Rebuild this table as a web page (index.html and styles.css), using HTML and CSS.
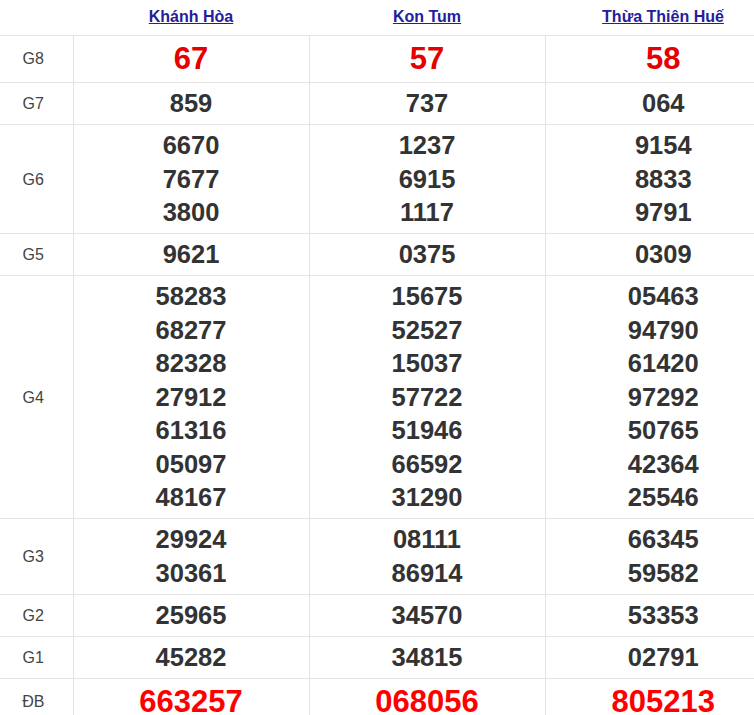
FILE: index.html
```html
<!DOCTYPE html>
<html lang="vi">
<head>
<meta charset="utf-8">
<title>XSMT</title>
<link rel="stylesheet" href="styles.css">
</head>
<body>
<table class="kq">
  <thead>
    <tr class="head">
      <th class="lbl"></th>
      <th><a href="#">Khánh Hòa</a></th>
      <th><a href="#">Kon Tum</a></th>
      <th><a href="#">Thừa Thiên Huế</a></th>
    </tr>
  </thead>
  <tbody>
    <tr class="g8">
      <td class="lbl">G8</td>
      <td><div>67</div></td>
      <td><div>57</div></td>
      <td><div>58</div></td>
    </tr>
    <tr>
      <td class="lbl">G7</td>
      <td><div>859</div></td>
      <td><div>737</div></td>
      <td><div>064</div></td>
    </tr>
    <tr>
      <td class="lbl">G6</td>
      <td><div>6670</div><div>7677</div><div>3800</div></td>
      <td><div>1237</div><div>6915</div><div>1117</div></td>
      <td><div>9154</div><div>8833</div><div>9791</div></td>
    </tr>
    <tr>
      <td class="lbl">G5</td>
      <td><div>9621</div></td>
      <td><div>0375</div></td>
      <td><div>0309</div></td>
    </tr>
    <tr>
      <td class="lbl">G4</td>
      <td><div>58283</div><div>68277</div><div>82328</div><div>27912</div><div>61316</div><div>05097</div><div>48167</div></td>
      <td><div>15675</div><div>52527</div><div>15037</div><div>57722</div><div>51946</div><div>66592</div><div>31290</div></td>
      <td><div>05463</div><div>94790</div><div>61420</div><div>97292</div><div>50765</div><div>42364</div><div>25546</div></td>
    </tr>
    <tr>
      <td class="lbl">G3</td>
      <td><div>29924</div><div>30361</div></td>
      <td><div>08111</div><div>86914</div></td>
      <td><div>66345</div><div>59582</div></td>
    </tr>
    <tr>
      <td class="lbl">G2</td>
      <td><div>25965</div></td>
      <td><div>34570</div></td>
      <td><div>53353</div></td>
    </tr>
    <tr>
      <td class="lbl">G1</td>
      <td><div>45282</div></td>
      <td><div>34815</div></td>
      <td><div>02791</div></td>
    </tr>
    <tr class="db">
      <td class="lbl">ĐB</td>
      <td><div>663257</div></td>
      <td><div>068056</div></td>
      <td><div>805213</div></td>
    </tr>
  </tbody>
</table>
</body>
</html>
```

FILE: styles.css
```css
html, body {
  margin: 0;
  padding: 0;
  background: #fff;
  overflow: hidden;
}
body {
  font-family: "Liberation Sans", Arial, sans-serif;
  color: #333;
}
.kq {
  border-collapse: collapse;
  table-layout: fixed;
  width: 781px;
}
.kq th, .kq td {
  padding: 0;
  text-align: center;
  vertical-align: middle;
}
.kq .head th {
  height: 33px;
  padding-bottom: 2px;
  border-bottom: 1px solid #e4e4e4;
  font-size: 16px;
  font-weight: bold;
}
.kq .head a {
  color: #23209c;
  text-decoration: underline;
}
.kq tbody td {
  border-bottom: 1px solid #e4e4e4;
  border-left: 1px solid #e4e4e4;
  padding: 4px 0 3.5px;
  font-size: 25.5px;
  font-weight: bold;
  line-height: 33.5px;
  color: #333;
}
.kq tbody tr.g8 td {
  font-size: 31px;
  line-height: 38.5px;
  color: #e60000;
}
.kq tbody tr.db td {
  font-size: 31px;
  line-height: 38.5px;
  color: #f00;
}
.kq .head th.lbl {
  width: 67px;
  padding-right: 6px;
}
.kq tbody tr td.lbl {
  width: 67px;
  padding-right: 6px;
  border-left: none;
  font-size: 16px;
  font-weight: normal;
  color: #444;
}
```
